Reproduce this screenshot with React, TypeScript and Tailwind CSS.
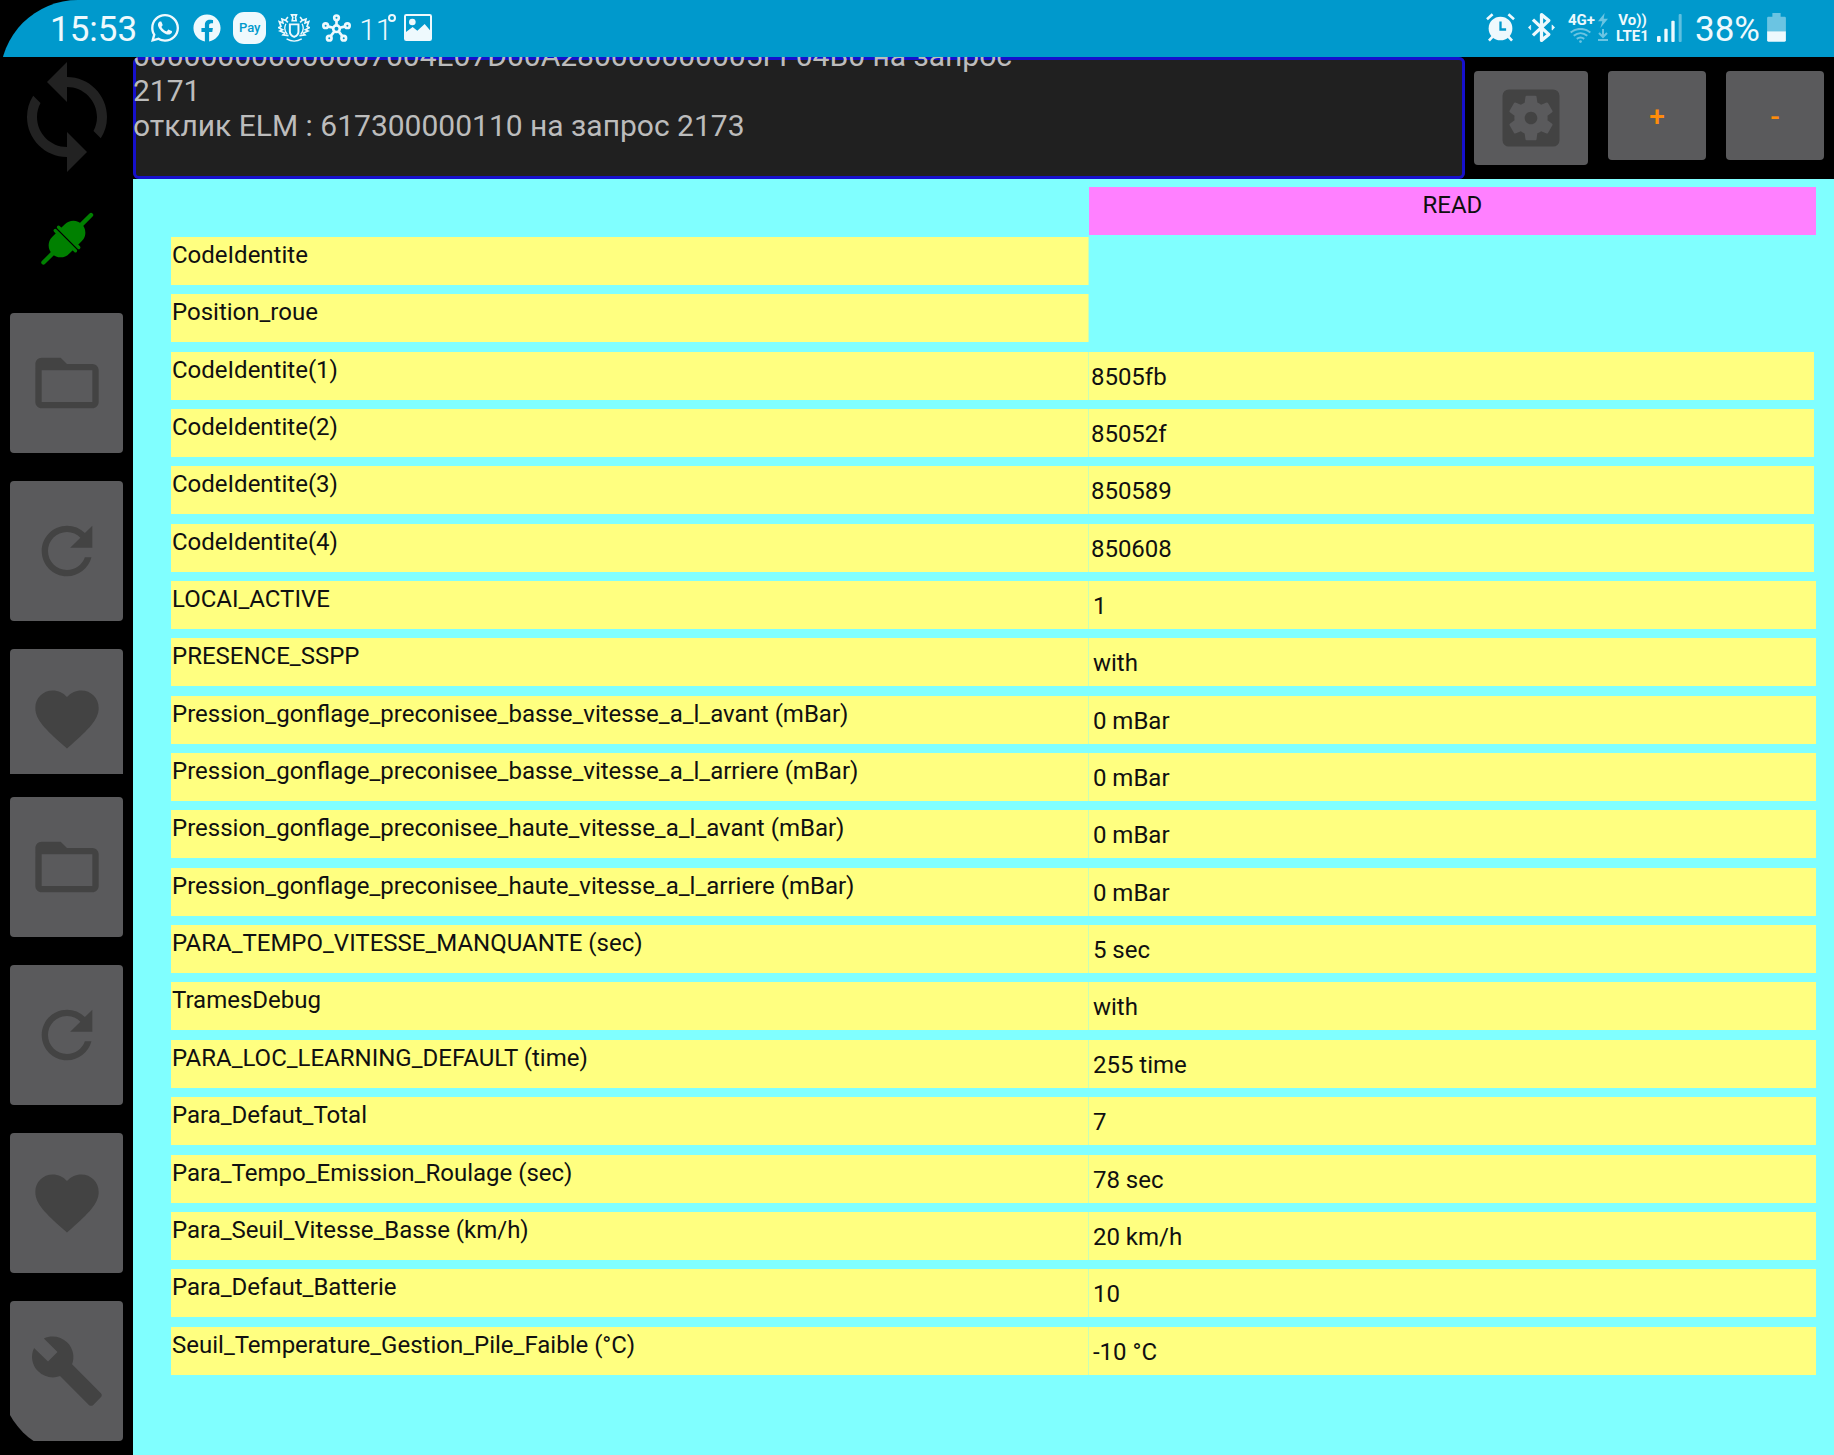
import type { ReactNode } from "react";
import { FaFacebook, FaWhatsapp } from "react-icons/fa";
import {
  MdBuild,
  MdFavorite,
  MdFolderOpen,
  MdRefresh,
  MdSettingsApplications,
  MdSync,
} from "react-icons/md";

type Row = { label: string; value?: string; raw?: boolean };

const rows: Row[] = [
  { label: "CodeIdentite" },
  { label: "Position_roue" },
  { label: "CodeIdentite(1)", value: "8505fb", raw: true },
  { label: "CodeIdentite(2)", value: "85052f", raw: true },
  { label: "CodeIdentite(3)", value: "850589", raw: true },
  { label: "CodeIdentite(4)", value: "850608", raw: true },
  { label: "LOCAI_ACTIVE", value: "1" },
  { label: "PRESENCE_SSPP", value: "with" },
  { label: "Pression_gonflage_preconisee_basse_vitesse_a_l_avant (mBar)", value: "0 mBar" },
  { label: "Pression_gonflage_preconisee_basse_vitesse_a_l_arriere (mBar)", value: "0 mBar" },
  { label: "Pression_gonflage_preconisee_haute_vitesse_a_l_avant (mBar)", value: "0 mBar" },
  { label: "Pression_gonflage_preconisee_haute_vitesse_a_l_arriere (mBar)", value: "0 mBar" },
  { label: "PARA_TEMPO_VITESSE_MANQUANTE (sec)", value: "5 sec" },
  { label: "TramesDebug", value: "with" },
  { label: "PARA_LOC_LEARNING_DEFAULT (time)", value: "255 time" },
  { label: "Para_Defaut_Total", value: "7" },
  { label: "Para_Tempo_Emission_Roulage (sec)", value: "78 sec" },
  { label: "Para_Seuil_Vitesse_Basse (km/h)", value: "20 km/h" },
  { label: "Para_Defaut_Batterie", value: "10" },
  { label: "Seuil_Temperature_Gestion_Pile_Faible (°C)", value: "-10 °C" },
];

const log = [
  "000000000000007004E07D00A280000000005FF04B0 на запрос",
  "2171",
  "отклик ELM : 617300000110 на запрос 2173",
];

const CrestIcon = () => (
  <svg viewBox="0 0 97 90" className="w-8 h-[30px]" fill="none" stroke="currentColor" strokeWidth="6">
    <path d="M36 34h26v22c0 9-6 13-13 16-7-3-13-7-13-16z" />
    <path d="M41 5h15l-3 8 2 10H43l2-10z" strokeWidth="5" />
    <path d="M30 12l-7 9 7 7M24 22L12 18l3 12-11-4 5 14-7 4 12 6-8 4 14 6-5 6 17 2" strokeWidth="5" />
    <path d="M67 12l7 9-7 7M73 22l12-4-3 12 11-4-5 14 7 4-12 6 8 4-14 6 5 6-17 2" strokeWidth="5" />
    <path d="M24 32c-6 12-3 24 4 32M73 32c6 12 3 24-4 32M26 78c14 8 32 8 46 0" strokeWidth="4" />
  </svg>
);

const MoleculeIcon = () => (
  <svg viewBox="0 0 88 84" className="w-[29px] h-7" fill="none" stroke="currentColor" strokeWidth="8">
    <circle cx="44" cy="44" r="10" />
    <circle cx="44" cy="11" r="7" />
    <circle cx="11" cy="35" r="7" />
    <circle cx="77" cy="35" r="7" />
    <circle cx="22" cy="73" r="7" />
    <circle cx="66" cy="73" r="7" />
    <path d="M44 17v17M17 37l17 4M71 37l-17 4M26 67l11-14M62 67L51 53" />
  </svg>
);

const PictureIcon = () => (
  <svg viewBox="0 0 84 81" className="w-7 h-[27px]" fill="currentColor">
    <path
      fillRule="evenodd"
      d="M7 0h70a7 7 0 0 1 7 7v67a7 7 0 0 1-7 7H7a7 7 0 0 1-7-7V7a7 7 0 0 1 7-7zM6 6v48l20-15 14 11 22-20 16 19V6z"
    />
    <circle cx="25" cy="24" r="10" />
  </svg>
);

const AlarmIcon = () => (
  <svg viewBox="0 0 88 88" className="w-[29px] h-[29px]" fill="none" stroke="currentColor">
    <circle cx="44" cy="47" r="36" fill="currentColor" stroke="none" />
    <path d="M3 19L20 4M85 19L68 4M20 72L9 84M68 72l11 12" strokeWidth="8" />
    <path d="M44 26v24h17" stroke="#0099cc" strokeWidth="7" />
  </svg>
);

const BluetoothIcon = () => (
  <svg viewBox="0 0 80 88" className="w-[27px] h-[29px]" fill="none" stroke="currentColor" strokeWidth="10">
    <path d="M14 20l48 45-22 18V5l22 18-48 45" strokeLinejoin="round" />
    <path d="M7 37v14l-7-7zM72 36l8 8-8 8z" fill="currentColor" strokeWidth="2" />
  </svg>
);

const WifiIcon = () => (
  <svg viewBox="0 0 62 44" className="w-[21px] h-[15px]" fill="none" stroke="currentColor" strokeWidth="6">
    <path d="M2 13c17-14 41-14 58 0M11 23c12-10 28-10 40 0M20 32c7-5 15-5 22 0" />
    <circle cx="31" cy="40" r="4" fill="currentColor" stroke="none" />
  </svg>
);

const SignalIcon = () => (
  <svg viewBox="0 0 75 84" className="w-[25px] h-7" fill="currentColor">
    <rect x="0" y="66" width="11" height="18" rx="3" />
    <rect x="22" y="44" width="10" height="40" rx="3" />
    <rect x="43" y="20" width="10" height="64" rx="3" />
    <rect x="65" y="0" width="9" height="84" rx="3" opacity=".4" />
  </svg>
);

const BatteryIcon = () => (
  <svg viewBox="0 0 57 88" className="w-[19px] h-[29px]" fill="currentColor">
    <path d="M16 0h25v11h12a4 4 0 0 1 4 4v40H0V15a4 4 0 0 1 4-4h12z" opacity=".45" />
    <path d="M0 55h57v28a4 4 0 0 1-4 4H4a4 4 0 0 1-4-4z" />
  </svg>
);

const PlugIcon = () => (
  <svg viewBox="120 484 162 168" className="w-[54px] h-14" fill="#008000" stroke="#008000">
    <g transform="translate(201 568) rotate(45)" strokeLinecap="round">
      <path d="M0-60v-42M0 60v40" strokeWidth="13" />
      <path d="M-36-7v-20a36 36 0 0 1 72 0v20zM-36 7v20a36 36 0 0 0 72 0V7z" stroke="none" />
      <path d="M-43-7h86M-43 7h86" strokeWidth="10" />
    </g>
  </svg>
);

const StatusBar = () => (
  <header className="h-[57px] shrink-0 bg-[#0099cc] text-[#eef9fd] flex items-center justify-between pl-[50px] pr-12 pb-[2px]">
    <div className="flex items-center gap-3">
      <span className="text-[35px] leading-[40px] pt-1">15:53</span>
      <FaWhatsapp className="w-8 h-8" />
      <FaFacebook className="w-7 h-7" />
      <span className="w-[33px] h-8 rounded-[11px] bg-[#eef9fd] text-[#0099cc] text-[13px] font-medium flex items-center justify-center">
        Pay
      </span>
      <CrestIcon />
      <div className="flex items-center gap-2">
        <MoleculeIcon />
        <span className="flex items-start">
          <span className="text-[30px] leading-8 font-light pt-1">11</span>
          <svg viewBox="0 0 8 8" className="w-2 h-2 mt-1 -ml-1" fill="none" stroke="currentColor" strokeWidth="2" aria-label="degrees">
            <circle cx="4" cy="4" r="3" />
          </svg>
        </span>
        <PictureIcon />
      </div>
    </div>
    <div className="flex items-center gap-[7px]">
      <div className="flex items-center gap-[13px] mr-[6px]">
        <AlarmIcon />
        <BluetoothIcon />
      </div>
      <div className="w-10 flex flex-col">
        <div className="flex justify-between items-center">
          <span className="text-[15px] leading-[14px] font-bold">4G+</span>
          <svg viewBox="0 0 30 45" className="w-[10px] h-[15px] shrink-0 opacity-45" fill="currentColor">
            <path d="M20 0L0 25h13L7 45l23-28H17z" />
          </svg>
        </div>
        <div className="flex justify-between items-center pl-[2px] opacity-45">
          <WifiIcon />
          <svg viewBox="0 0 30 36" className="w-[10px] h-3" fill="none" stroke="currentColor" strokeWidth="6">
            <path d="M15 0v24M3 12l12 12 12-12M0 33h30" />
          </svg>
        </div>
      </div>
      <div className="w-[35px] flex flex-col items-center text-[15px] leading-[16px] font-bold">
        <span>Vo))</span>
        <span>LTE1</span>
      </div>
      <SignalIcon />
      <span className="text-[35px] leading-[40px] pt-1 ml-[6px]">38%</span>
      <BatteryIcon />
    </div>
  </header>
);

const SideButton = ({ label, children }: { label: string; children: ReactNode }) => (
  <button
    aria-label={label}
    className="w-full h-[140px] shrink-0 rounded bg-[#5a5a5c] text-[#434343] text-[76px] flex items-center justify-center"
  >
    {children}
  </button>
);

const Sidebar = () => (
  <aside className="w-[133px] shrink-0 px-[10px] flex flex-col items-center">
    <MdSync className="w-[120px] h-[120px] shrink-0 text-[#222222]" />
    <div className="h-[136px] shrink-0 pt-[34px]">
      <PlugIcon />
    </div>
    <div className="w-full h-[461px] shrink-0 overflow-hidden flex flex-col gap-7">
      <SideButton label="Open file"><MdFolderOpen /></SideButton>
      <SideButton label="Reload file"><MdRefresh /></SideButton>
      <SideButton label="Favourite file"><MdFavorite /></SideButton>
    </div>
    <div className="w-full pt-[23px] pb-[14px] flex flex-col gap-7">
      <SideButton label="Open screen"><MdFolderOpen /></SideButton>
      <SideButton label="Reload screen"><MdRefresh /></SideButton>
      <SideButton label="Favourite screen"><MdFavorite /></SideButton>
      <SideButton label="Tools"><MdBuild /></SideButton>
    </div>
  </aside>
);

const Toolbar = () => (
  <div className="h-[122px] shrink-0 flex">
    <div className="flex-1 min-w-0 overflow-hidden flex flex-col justify-end pb-9 rounded-md bg-[#202020] shadow-[inset_0_0_0_3px_#1610cc] text-[#bcbcbc] text-[30px] leading-[35px]">
      {log.map((line) => (
        <p key={line} className="whitespace-nowrap">{line}</p>
      ))}
    </div>
    <div className="flex items-start gap-5 pt-[14px] pl-[9px] pr-[10px]">
      <button
        aria-label="Settings"
        className="w-[114px] h-[94px] rounded bg-[#5a5a5c] text-[#434343] text-[76px] flex items-center justify-center"
      >
        <MdSettingsApplications />
      </button>
      <button className="w-[98px] h-[89px] pt-[2px] rounded bg-[#5a5a5c] text-[#ff8c0a] text-[28px] font-medium">+</button>
      <button className="w-[98px] h-[89px] pt-[2px] rounded bg-[#5a5a5c] text-[#ff8c0a] text-[28px] font-medium">-</button>
    </div>
  </div>
);

const ParameterTable = () => (
  <table className="w-full h-[1197px] table-fixed border-collapse text-2xl leading-7 text-[#101010]">
    <colgroup>
      <col className="w-[55.8%]" />
      <col />
    </colgroup>
    <thead>
      <tr className="h-[50px] align-top">
        <td />
        <th className="p-0 font-normal">
          <button className="block w-full h-12 pb-3 bg-[#ff80ff]">READ</button>
        </th>
      </tr>
    </thead>
    <tbody>
      {rows.map(({ label, value, raw }) => (
        <tr key={label} className="align-top">
          <th scope="row" className="p-0 font-normal text-left">
            <div className="h-12 pt-1 pl-px bg-[#ffff80] border-r border-[#c8ffb4]">{label}</div>
          </th>
          <td className="p-0">
            {value && (
              <div
                className={
                  raw
                    ? "h-12 mr-[2px] pt-[11px] pl-[2px] bg-[#ffff80]"
                    : "h-12 pt-[11px] pl-1 bg-[#ffff80]"
                }
              >
                {value}
              </div>
            )}
          </td>
        </tr>
      ))}
    </tbody>
  </table>
);

export default function App() {
  return (
    <div className="min-h-screen bg-black flex font-[Roboto,sans-serif]">
      <div className="flex-1 min-w-0 flex flex-col overflow-hidden rounded-l-[78px]">
        <StatusBar />
        <div className="flex-1 flex">
          <Sidebar />
          <div className="flex-1 min-w-0 flex flex-col">
            <Toolbar />
            <main className="flex-1 bg-[#80ffff] pt-2 pl-[38px] pr-[18px]">
              <ParameterTable />
            </main>
          </div>
        </div>
      </div>
    </div>
  );
}
